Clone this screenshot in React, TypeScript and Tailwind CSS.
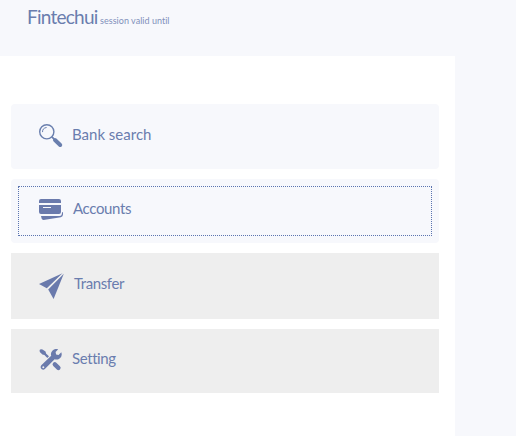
import type { ReactNode } from "react";

function SearchIcon() {
  return (
    <svg width="26" height="26" viewBox="0.4 0.4 26 26" fill="none">
      <circle cx="8.2" cy="8.2" r="7.1" stroke="#6a7fae" strokeWidth="1.4" />
      <path d="M3.9 8.5A4.6 4.6 0 0 1 8 3.9" stroke="#6a7fae" strokeWidth="1" />
      <path d="M13.2 13.2l2.4 2.4" stroke="#6a7fae" strokeWidth="1.8" />
      <path d="M16.4 16.4l5.2 5" stroke="#6a7fae" strokeWidth="4" strokeLinecap="round" />
    </svg>
  );
}

function CardsIcon() {
  return (
    <svg width="26" height="26" viewBox="0 0 26 26" fill="#6a7aac">
      <path d="M0 4V2Q0 0 2 0H20Q22 0 22 2V4Z" />
      <path fillRule="evenodd" d="M0 6H22V13Q22 15 20 15H2Q0 15 0 13ZM4 8V9H12V8Z" />
      <path d="M2 17H20.5Q23 17 23 13.5L24 13V15.5Q24 17.8 21.8 18.3L4.5 21Q3 21 2.6 19.6Z" />
    </svg>
  );
}

function PlaneIcon() {
  return (
    <svg width="26" height="28" viewBox="0 0 26 28" fill="#6a7aac">
      <path d="M0 11L23.5 .2L7.8 15.2Z" />
      <path d="M24.8 .7L14.6 26L9.2 16.6Z" />
      <path d="M8.2 15.8L22.5 2.1" stroke="#eeeeee" strokeWidth="1" />
    </svg>
  );
}

function ToolsIcon() {
  return (
    <svg width="26" height="26" viewBox="0 0 26 26" fill="#6a7aac">
      <path d="M.6 1Q1.5-.1 3.5.6L6.5 2.6L7.2 4.7L10 7.3L8.3 8.9L5.4 6.1L3.4 5.4L.8 2.9Z" />
      <path d="M15.8 15.4L19.4 18.9" stroke="#6a7aac" strokeWidth="4.4" strokeLinecap="round" />
      <path
        fillRule="evenodd"
        d="M19.2.3L16.6 3.1L17.1 5.4L19.5 6L22.3 3.2Q23.8 8.1 20 10Q17.9 11 15.6 10.3L6.1 19.8Q4.5 21.3 2.8 20.3Q.7 18.6 2.3 16.3L12.2 6.7Q11.2 3.8 13.6 1.5Q16-.8 19.2.3ZM4.3 17.2A1 1 0 1 0 4.3 19.2A1 1 0 0 0 4.3 17.2Z"
      />
    </svg>
  );
}

type ItemProps = {
  icon: ReactNode;
  label: string;
  className: string;
  labelClassName: string;
};

function MenuItem({ icon, label, className, labelClassName }: ItemProps) {
  return (
    <button type="button" className={`flex w-full items-start text-left ${className}`}>
      <span className="w-[26px] shrink-0">{icon}</span>
      <span className={`whitespace-nowrap text-[15px] leading-5 ${labelClassName}`}>{label}</span>
    </button>
  );
}

export default function App() {
  return (
    <div className="flex h-[436px] w-[516px] flex-col overflow-hidden bg-[#f7f8fc] font-['Lato',sans-serif] text-[#6a7dae]">
      <header className="flex h-14 shrink-0 items-baseline pl-[27px] pt-1">
        <h1 className="w-[73px] whitespace-nowrap text-[19px] leading-[26px] tracking-[-0.75px]">Fintechui</h1>
        <span className="whitespace-nowrap text-[9px] tracking-[0.03px] text-[#8290bb]">session valid until</span>
      </header>
      <main className="w-[455px] flex-1 bg-white pl-[11px] pr-4 pt-12">
        <nav className="flex flex-col gap-2.5">
          <MenuItem
            icon={<SearchIcon />}
            label="Bank search"
            className="h-[65px] rounded bg-[#f7f8fc] pl-7 pt-5"
            labelClassName="ml-[7px]"
          />
          <div className="h-16 rounded bg-[#f7f8fc] p-[7px]">
            <MenuItem
              icon={<CardsIcon />}
              label="Accounts"
              className="h-[50px] pl-[21px] pt-[13px] outline-1 -outline-offset-1 outline-dotted outline-[#5b74b0]"
              labelClassName="-mt-px ml-2 tracking-[-0.35px]"
            />
          </div>
          <MenuItem
            icon={<PlaneIcon />}
            label="Transfer"
            className="h-[66px] bg-[#eeeeee] pl-7 pt-5"
            labelClassName="ml-[9px] tracking-[-0.4px]"
          />
          <MenuItem
            icon={<ToolsIcon />}
            label="Setting"
            className="h-16 bg-[#eeeeee] pl-7 pt-5"
            labelClassName="-mt-px ml-[7px] tracking-[-0.4px]"
          />
        </nav>
      </main>
    </div>
  );
}
